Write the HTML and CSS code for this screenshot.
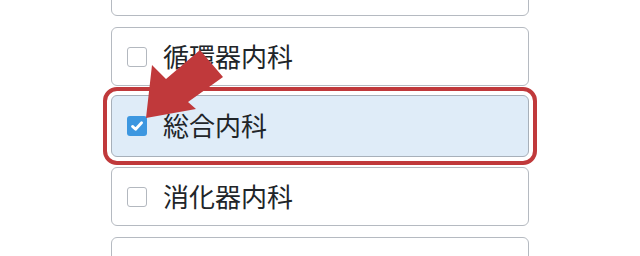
FILE: index.html
```html
<!DOCTYPE html>
<html lang="ja">

<head>
  <title>診療科</title>
  <link rel="stylesheet" href="styles.css">
</head>

<body>
  <div id="list">
    <label class="item">
      <span class="box"></span>
      <span class="name">呼吸器内科</span>
    </label>
    <label class="item">
      <span class="box"></span>
      <span class="name">循環器内科</span>
    </label>
    <label class="item checked">
      <span class="box">
        <svg viewBox="0 0 20 20" width="20" height="20">
          <path d="M5.5 10.4 L8.6 13.2 L14.6 6.8" fill="none" stroke="#fff" stroke-width="2.8" stroke-linecap="round" stroke-linejoin="round"/>
        </svg>
      </span>
      <span class="name">総合内科</span>
    </label>
    <label class="item">
      <span class="box"></span>
      <span class="name">消化器内科</span>
    </label>
    <label class="item"></label>
  </div>

  <!-- annotation arrow drawn over the list -->
  <svg id="arrow" width="640" height="256" viewBox="0 0 640 256">
    <polygon points="146,118 152,65 166,79 200,50 223,77 188,102 196,109" fill="#c0393b"/>
  </svg>
</body>

</html>
```

FILE: styles.css
```css
html,
body {
  margin: 0;
  height: 100%;
  overflow: hidden;
  background: white;
}

body {
  font-family: "Noto Sans CJK JP", "Noto Sans", sans-serif;
  color: #212529;
  position: relative;
}

#list {
  display: flex;
  flex-direction: column;
  gap: 11px;
  width: 418px;
  margin: -43px 0 0 111px;
}

.item {
  box-sizing: border-box;
  height: 59px;
  flex-shrink: 0;
  display: flex;
  align-items: center;
  padding-left: 15px;
  border: 1px solid #b5bac1;
  border-radius: 6px;
  background: white;
}

.item.checked {
  height: 62px;
  margin: -2px 0 -1px;
  background: #dfecf8;
  border-color: #a7b0ba;
  outline: 4px solid #c0393b;
  outline-offset: 4px;
}

.box {
  box-sizing: border-box;
  flex-shrink: 0;
  width: 20px;
  height: 20px;
  border: 1px solid #b3b8bf;
  border-radius: 3px;
  background: white;
  display: flex;
  align-items: center;
  justify-content: center;
}

.checked .box {
  border: none;
  background: #3d97e0;
}

.name {
  margin-left: 16px;
  font-size: 26px;
  line-height: 1;
  margin-bottom: 2px;
}

#arrow {
  position: absolute;
  left: 0;
  top: 0;
  pointer-events: none;
}
```
